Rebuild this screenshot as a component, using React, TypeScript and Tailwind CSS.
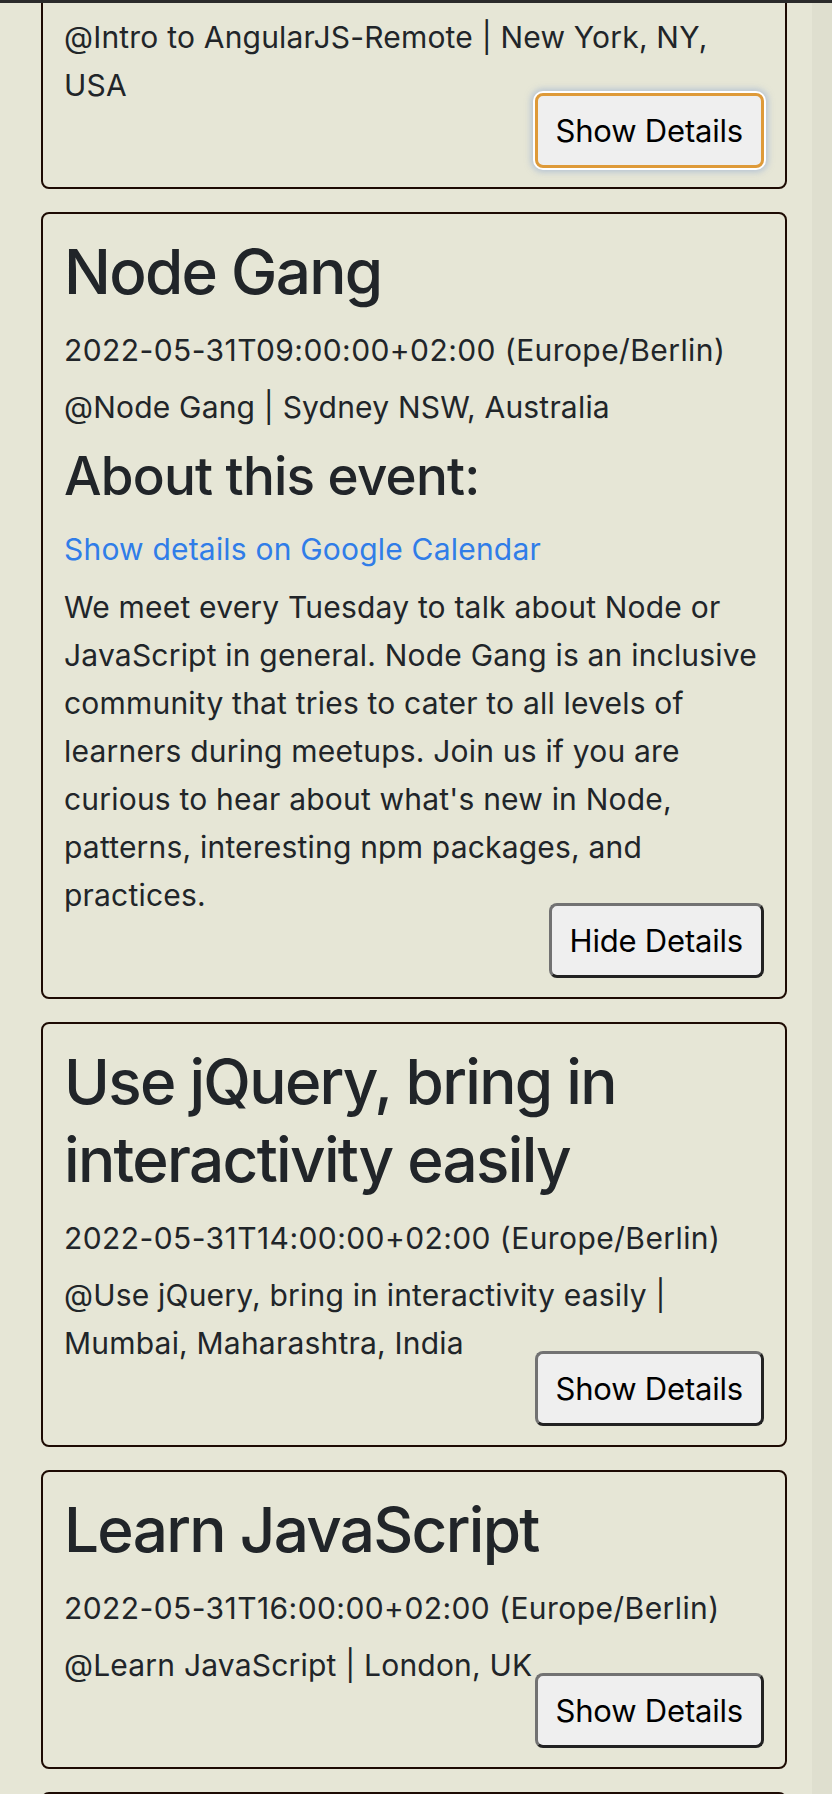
import React from "react";

const FONT = "font-['Inter','Noto_Sans',sans-serif]";

function DetailsButton({ label, focused }: { label: string; focused?: boolean }) {
  const base =
    "self-end -mt-[16px] h-[75px] px-[18px] rounded-[8px] bg-[#efefef] text-[31px] tracking-[-0.2px] leading-none text-black border-[3px] " +
    FONT;
  const look = focused
    ? "border-[#de9a39] shadow-[0_0_0_2px_#ffffff,0_0_6px_4px_rgba(140,165,210,0.55)]"
    : "border-t-[#727272] border-l-[#727272] border-r-[#222222] border-b-[#222222]";
  return <button className={base + " " + look}>{label}</button>;
}

function Card({ children, className = "" }: { children: React.ReactNode; className?: string }) {
  return (
    <div
      className={
        "flex w-[746px] flex-col rounded-[8px] border-2 border-[#1d0b03] px-[21px] pt-[19px] pb-[19px] " + className
      }
    >
      {children}
    </div>
  );
}

const H1 = ({ children }: { children: React.ReactNode }) => (
  <h1 className="mb-[15px] w-[700px] text-[62px] leading-[78px] tracking-[-1.7px] font-medium text-[#212529]">
    {children}
  </h1>
);

const P = ({ children, className = "" }: { children: React.ReactNode; className?: string }) => (
  <p className={"w-[696px] text-[30px] leading-[48px] text-[#212529] " + className}>{children}</p>
);

export default function App() {
  return (
    <div className={"relative flex min-h-[1794px] overflow-hidden bg-[#e6e6d6] " + FONT}>
      <div className="absolute inset-x-0 top-0 h-[3px] bg-[#2b2b2b]" />
      <main className="flex-1 pl-[41px]">
        <div className="-mt-[8px] flex flex-col gap-[23px]">
          <Card>
            <P className="tracking-[0.2px]">@Intro to AngularJS-Remote | New York, NY, USA</P>
            <DetailsButton label="Show Details" focused />
          </Card>

          <Card>
            <H1>Node Gang</H1>
            <P className="mb-[9px] tracking-[0.42px]">2022-05-31T09:00:00+02:00 (Europe/Berlin)</P>
            <P className="mb-[12px] tracking-[0.2px]">@Node Gang | Sydney NSW, Australia</P>
            <h2 className="mb-[16px] text-[53px] leading-[66px] tracking-[-0.8px] font-medium text-[#212529]">
              About this event:
            </h2>
            <P className="mb-[10px] tracking-[0.2px]">
              <a className="text-[#307de8]">Show details on Google Calendar</a>
            </P>
            <P className="tracking-[0.2px]">
              We meet every Tuesday to talk about Node or JavaScript in general. Node Gang is an inclusive community
              that tries to cater to all levels of learners during meetups. Join us if you are curious to hear about
              what's new in Node, patterns, interesting npm packages, and practices.
            </P>
            <DetailsButton label="Hide Details" />
          </Card>

          <Card>
            <H1>Use jQuery, bring in interactivity easily</H1>
            <P className="mb-[9px] tracking-[0.42px]">2022-05-31T14:00:00+02:00 (Europe/Berlin)</P>
            <P className="tracking-[0.2px]">@Use jQuery, bring in interactivity easily | Mumbai, Maharashtra, India</P>
            <DetailsButton label="Show Details" />
          </Card>

          <Card>
            <H1>Learn JavaScript</H1>
            <P className="mb-[9px] tracking-[0.42px]">2022-05-31T16:00:00+02:00 (Europe/Berlin)</P>
            <P className="tracking-[0.2px]">@Learn JavaScript | London, UK</P>
            <DetailsButton label="Show Details" />
          </Card>

          <Card className="h-[200px]">
            <div />
          </Card>
        </div>
      </main>
      <aside className="w-[20px] bg-[#dfdfcf]" />
    </div>
  );
}
